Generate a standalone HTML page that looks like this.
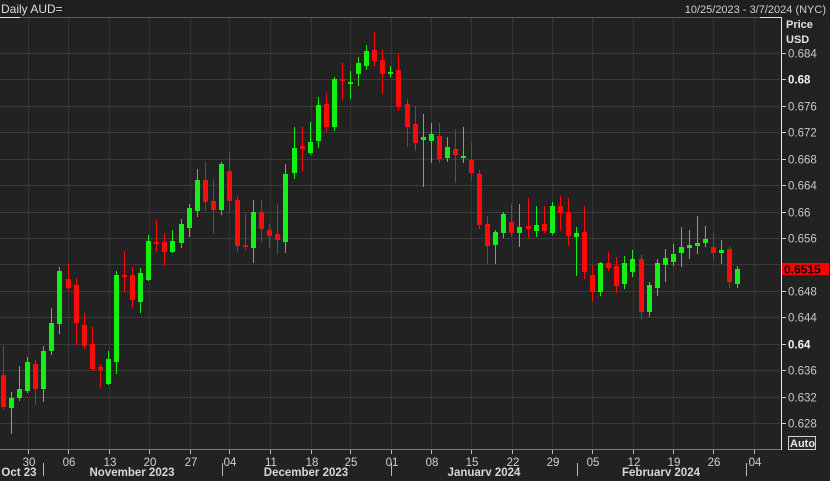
<!DOCTYPE html>
<html><head><meta charset="utf-8"><style>
html,body{margin:0;padding:0;background:#222;}
body{width:830px;height:476px;overflow:hidden;font-family:"Liberation Sans",sans-serif;}
svg text{font-family:"Liberation Sans",sans-serif;}
</style></head><body>
<svg id="s" width="830" height="476" xmlns="http://www.w3.org/2000/svg">
<rect width="830" height="476" fill="#222222"/>
<rect width="830" height="17" fill="#1f1f1f"/>
<text x="1" y="13" fill="#dcdcdc" font-size="12">Daily AUD=</text>
<text x="826" y="13" fill="#cfcfcf" font-size="11" text-anchor="end">10/25/2023 - 3/7/2024 (NYC)</text>
<line x1="0" y1="17.5" x2="781" y2="17.5" stroke="#5a5a5a"/>
<line x1="0" y1="17.5" x2="20" y2="17.5" stroke="#ddd"/>
<line x1="760" y1="17.5" x2="781" y2="17.5" stroke="#ddd"/>
<g id="grid"></g>
<g id="candles"></g>
<line x1="781.5" y1="17" x2="781.5" y2="450" stroke="#e8e8e8"/>
<line x1="0" y1="449.5" x2="781" y2="449.5" stroke="#777"/>
<text x="786" y="28" fill="#e0e0e0" font-size="11" font-weight="bold">Price</text>
<text x="786" y="43" fill="#e0e0e0" font-size="11" font-weight="bold">USD</text>
<g id="ylab" font-size="11.5"></g>
<rect x="782" y="263" width="47" height="12" fill="#ff0000"/>
<text x="784" y="273.5" fill="#000" font-size="12" font-weight="bold">0.6515</text>
<rect x="788.5" y="436.5" width="27" height="13" fill="#2a2a2a" stroke="#cfcfcf"/>
<text x="790" y="447" fill="#e8e8e8" font-size="11" font-weight="bold">Auto</text>
<g id="xlab" font-size="11.5" fill="#d0d0d0" text-anchor="middle"></g>
<g font-size="11.5" font-weight="bold" fill="#d8d8d8" text-anchor="middle">
<text x="19" y="476">Oct 23</text>
<text x="132" y="476">November 2023</text>
<text x="306" y="476">December 2023</text>
<text x="484" y="476">January 2024</text>
<text x="661" y="476">February 2024</text>
</g>
<g stroke="#bbb">
<line x1="43.5" y1="463" x2="43.5" y2="476"/><line x1="222.5" y1="463" x2="222.5" y2="476"/>
<line x1="391.5" y1="463" x2="391.5" y2="476"/><line x1="577.5" y1="463" x2="577.5" y2="476"/>
<line x1="746.5" y1="463" x2="746.5" y2="476"/>
</g>
</svg>
<script>
var NS="http://www.w3.org/2000/svg";
function el(p,t,a,txt){var e=document.createElementNS(NS,t);for(var k in a)e.setAttribute(k,a[k]);if(txt)e.textContent=txt;p.appendChild(e);return e;}
var grid=document.getElementById('grid'),yl=document.getElementById('ylab'),xl=document.getElementById('xlab');
var prices=['0.684','0.68','0.676','0.672','0.668','0.664','0.66','0.656','0.652','0.648','0.644','0.64','0.636','0.632','0.628'];
prices.forEach(function(p,i){var y=Math.round(53+i*26.43)+0.5;
 el(grid,'line',{x1:0,y1:y,x2:781,y2:y,stroke:'#3a3a3a'});
 el(yl,'line',{x1:781,y1:y,x2:786,y2:y,stroke:'#ccc'});
 if(p!=='0.652'){var b=(p==='0.68'||p==='0.64');el(yl,'text',{x:788,y:y+4,fill:b?'#f0f0f0':'#c8c8c8','font-weight':b?'bold':'normal'},p);}
});
var xs=[[29,'30'],[69,'06'],[110,'13'],[150,'20'],[191,'27'],[230,'04'],[271,'11'],[312,'18'],[351,'25'],[392,'01'],[432,'08'],[472,'15'],[513,'22'],[553,'29'],[593,'05'],[634,'12'],[674,'19'],[714,'26'],[755,'04']];
xs.forEach(function(a){var x=Math.round(a[0])-0.5;
 el(grid,'line',{x1:x,y1:18,x2:x,y2:449,stroke:'#353535'});
 el(xl,'line',{x1:x,y1:450,x2:x,y2:454,stroke:'#bbb'});
 el(xl,'text',{x:a[0],y:466},a[1]);
});
var D=[
['r',375,407,346,410],['g',398,408,392,434],['g',389,398,366,401],['g',362,391,357,393],['r',364,389,360,405],['g',351,389,346,402],['g',323,351,308,355],['g',271,324,267,334],['r',279,288,264,291],['r',285,323,278,345],
['r',325,346,313,349],['r',344,369,327,371],['r',367,370,364,388],['g',359,384,351,385],['g',275,362,271,374],['r',275,277,251,292],['r',275,300,267,308],['g',273,302,268,313],['g',241,280,235,281],['r',242,244,220,252],
['r',242,252,233,266],['g',241,252,230,253],['g',224,243,219,248],['g',208,228,204,237],['g',180,211,169,217],['r',180,202,162,211],['r',201,210,179,233],['g',164,210,162,215],['r',171,201,152,212],['r',200,246,196,252],
['r',245,247,214,250],['g',212,248,200,263],['r',212,229,200,242],['r',230,236,224,248],['r',234,240,204,254],['g',174,242,164,253],['g',148,173,127,179],['r',146,149,127,172],['g',142,153,122,155],['g',105,141,97,148],
['r',104,127,93,132],['g',79,127,77,131],['r',79,81,63,100],['g',82,84,71,99],['g',63,74,57,86],['g',51,66,45,70],['r',50,61,32,66],['r',60,74,49,94],['g',72,74,66,77],['r',70,107,53,111],
['r',104,127,99,147],['r',124,143,106,151],['g',137,140,114,187],['g',134,141,123,163],['r',136,159,123,163],['g',147,158,137,162],['r',149,155,129,183],['g',156,158,127,163],['r',160,173,143,181],['r',174,225,170,229],
['r',224,246,216,264],['g',232,245,230,264],['g',214,233,212,238],['r',222,233,204,237],['g',227,233,204,247],['r',226,229,198,238],['g',225,231,206,237],['r',224,231,206,233],['g',206,233,202,235],['r',206,213,196,231],
['r',212,236,198,246],['g',233,237,227,276],['r',232,272,206,279],['r',275,292,265,302],['g',263,292,262,296],['r',263,268,252,271],['r',266,286,257,293],['g',263,284,256,289],['g',259,272,250,277],['r',259,312,255,319],
['g',285,312,282,317],['g',263,288,259,296],['g',258,265,249,282],['g',254,262,244,266],['g',247,253,227,267],['g',245,248,230,259],['g',243,246,216,254],['g',239,243,226,247],['r',247,253,233,260],['g',250,253,240,264],
['r',249,282,246,288],['g',269,284,266,288]];
var cg=document.getElementById('candles');
D.forEach(function(d,i){var cx=Math.round(3+8.07*i);var c=d[0]=='g'?'#14f014':'#ff0a0a';
 el(cg,'rect',{x:cx,y:d[3],width:1,height:d[4]-d[3],fill:c});
 var h=Math.max(d[2]-d[1],2);
 el(cg,'rect',{x:cx-2,y:d[1],width:5,height:h,fill:c});
});
</script>
</body></html>
